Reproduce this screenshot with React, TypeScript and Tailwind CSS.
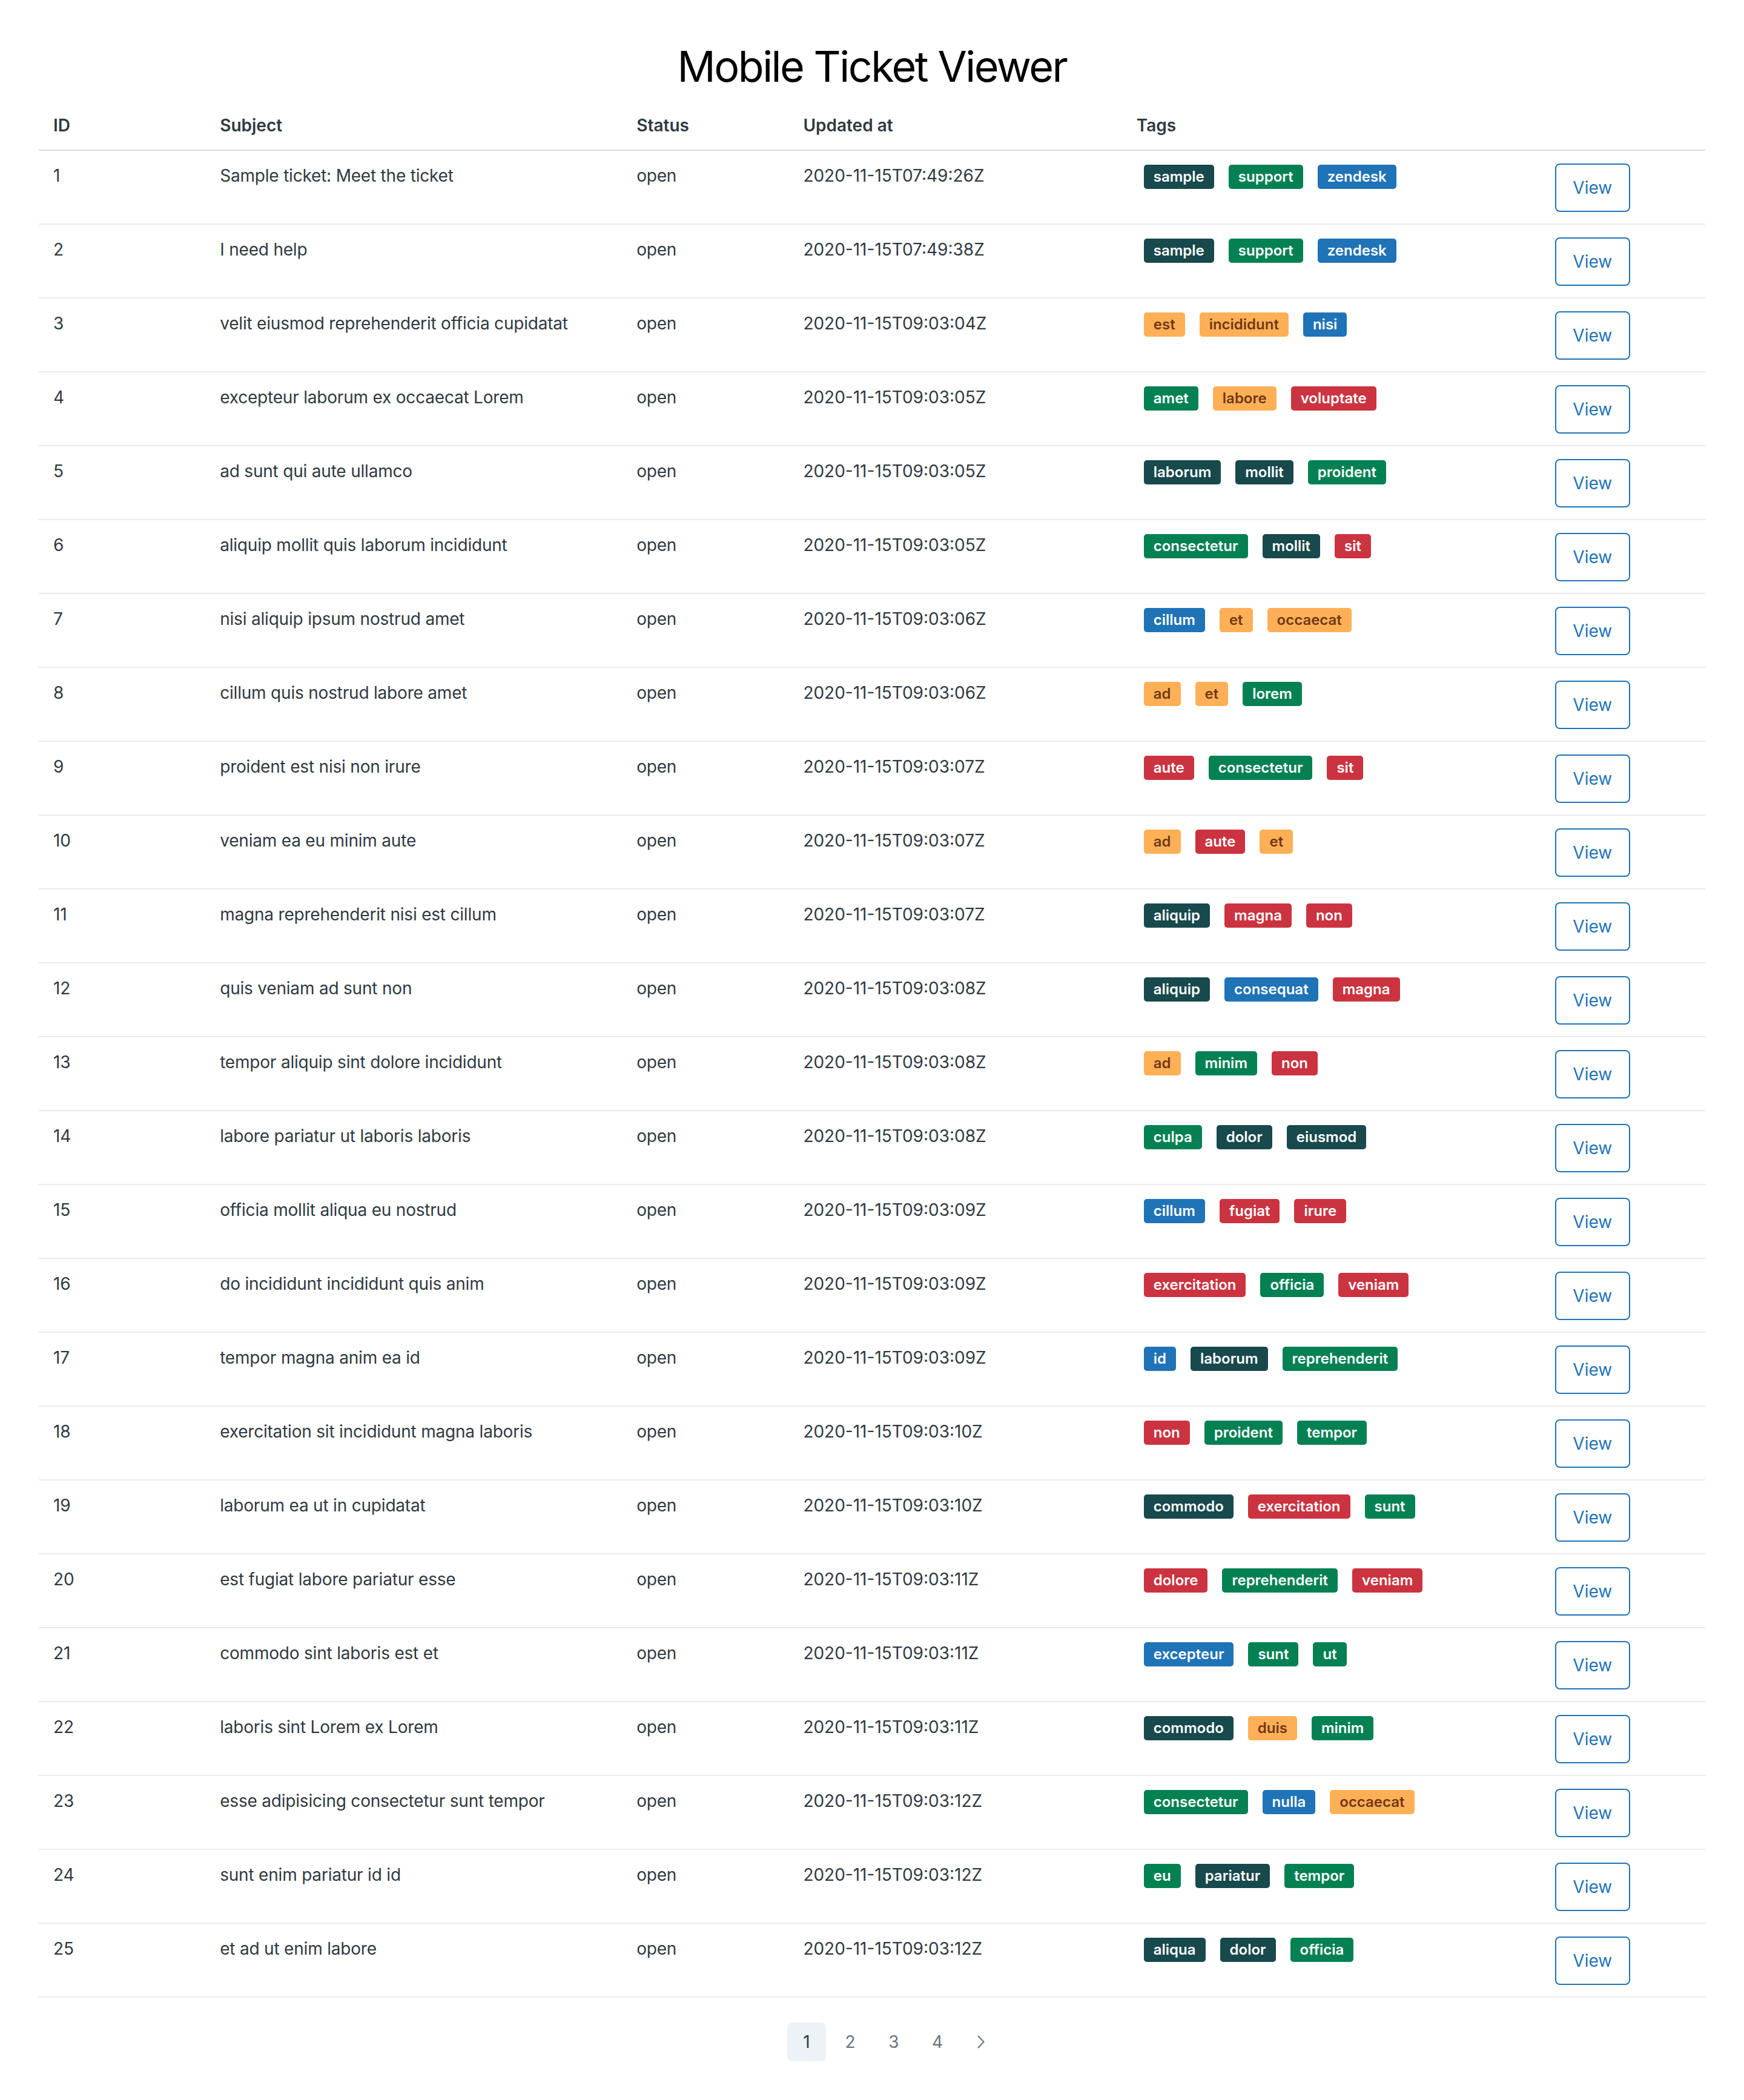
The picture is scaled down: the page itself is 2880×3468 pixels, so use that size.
import React from "react"

type Color = "dark" | "green" | "blue" | "orange" | "red"

const TAG_COLORS: Record<string, Color> = {
  sample: "dark",
  support: "green",
  zendesk: "blue",
  est: "orange",
  incididunt: "orange",
  nisi: "blue",
  amet: "green",
  labore: "orange",
  voluptate: "red",
  laborum: "dark",
  mollit: "dark",
  proident: "green",
  consectetur: "green",
  sit: "red",
  cillum: "blue",
  et: "orange",
  occaecat: "orange",
  ad: "orange",
  lorem: "green",
  aute: "red",
  aliquip: "dark",
  magna: "red",
  non: "red",
  consequat: "blue",
  minim: "green",
  culpa: "green",
  dolor: "dark",
  eiusmod: "dark",
  fugiat: "red",
  irure: "red",
  exercitation: "red",
  officia: "green",
  veniam: "red",
  id: "blue",
  reprehenderit: "green",
  tempor: "green",
  commodo: "dark",
  sunt: "green",
  dolore: "red",
  excepteur: "blue",
  ut: "green",
  duis: "orange",
  nulla: "blue",
  eu: "green",
  pariatur: "dark",
  aliqua: "dark",
}

const TAG_CLASS: Record<Color, string> = {
  dark: "bg-[#17494d] text-white",
  green: "bg-[#038153] text-white",
  blue: "bg-[#1f73b7] text-white",
  orange: "bg-[#ffb057] text-[#703815]",
  red: "bg-[#cc3340] text-white",
}

const tickets: [number, string, string, string][] = [
  [1, "Sample ticket: Meet the ticket", "07:49:26", "sample support zendesk"],
  [2, "I need help", "07:49:38", "sample support zendesk"],
  [3, "velit eiusmod reprehenderit officia cupidatat", "09:03:04", "est incididunt nisi"],
  [4, "excepteur laborum ex occaecat Lorem", "09:03:05", "amet labore voluptate"],
  [5, "ad sunt qui aute ullamco", "09:03:05", "laborum mollit proident"],
  [6, "aliquip mollit quis laborum incididunt", "09:03:05", "consectetur mollit sit"],
  [7, "nisi aliquip ipsum nostrud amet", "09:03:06", "cillum et occaecat"],
  [8, "cillum quis nostrud labore amet", "09:03:06", "ad et lorem"],
  [9, "proident est nisi non irure", "09:03:07", "aute consectetur sit"],
  [10, "veniam ea eu minim aute", "09:03:07", "ad aute et"],
  [11, "magna reprehenderit nisi est cillum", "09:03:07", "aliquip magna non"],
  [12, "quis veniam ad sunt non", "09:03:08", "aliquip consequat magna"],
  [13, "tempor aliquip sint dolore incididunt", "09:03:08", "ad minim non"],
  [14, "labore pariatur ut laboris laboris", "09:03:08", "culpa dolor eiusmod"],
  [15, "officia mollit aliqua eu nostrud", "09:03:09", "cillum fugiat irure"],
  [16, "do incididunt incididunt quis anim", "09:03:09", "exercitation officia veniam"],
  [17, "tempor magna anim ea id", "09:03:09", "id laborum reprehenderit"],
  [18, "exercitation sit incididunt magna laboris", "09:03:10", "non proident tempor"],
  [19, "laborum ea ut in cupidatat", "09:03:10", "commodo exercitation sunt"],
  [20, "est fugiat labore pariatur esse", "09:03:11", "dolore reprehenderit veniam"],
  [21, "commodo sint laboris est et", "09:03:11", "excepteur sunt ut"],
  [22, "laboris sint Lorem ex Lorem", "09:03:11", "commodo duis minim"],
  [23, "esse adipisicing consectetur sunt tempor", "09:03:12", "consectetur nulla occaecat"],
  [24, "sunt enim pariatur id id", "09:03:12", "eu pariatur tempor"],
  [25, "et ad ut enim labore", "09:03:12", "aliqua dolor officia"],
]

const COLS = "grid grid-cols-[10%_25%_10%_20%_25%_10%]"

function Tag({ label }: { label: string }) {
  const color = TAG_COLORS[label] || "dark"
  return (
    <span
      className={`mx-3 inline-flex h-10 items-center rounded-[5px] px-4 text-[24px] font-semibold leading-none ${TAG_CLASS[color]}`}
    >
      {label}
    </span>
  )
}

export default function App() {
  return (
    <div
      className="min-h-[3468px] bg-white px-16 pb-16 text-[#2f3941]"
      style={{ fontFamily: "Inter, 'Noto Sans', sans-serif" }}
    >
      {/* TITLE */}
      <h1 className="pt-[66px] text-center text-[70px] leading-[88px] font-normal tracking-[-2.5px] text-black">
        Mobile Ticket Viewer
      </h1>

      {/* HEADER */}
      <div className={`${COLS} border-b-2 border-[#d8dcde] pt-[33px] pb-5 text-[28px] leading-10 font-semibold`}>
        <div className="px-6">ID</div>
        <div className="px-6">Subject</div>
        <div className="px-6">Status</div>
        <div className="px-6">Updated at</div>
        <div className="px-6">Tags</div>
        <div className="px-6"></div>
      </div>

      {/* ROWS */}
      {tickets.map(([id, subject, time, tags]) => (
        <div
          key={id}
          className={`${COLS} h-[122px] border-b-2 border-[#e9ebed] pt-[21px] text-[28px] leading-10 tracking-[-0.2px]`}
        >
          <div className="px-6">{id}</div>
          <div className="px-6">{subject}</div>
          <div className="px-6">open</div>
          <div className="px-6 tracking-normal">2020-11-15T{time}Z</div>
          <div className="flex items-start px-6 pt-[2px] tracking-normal">
            {tags.split(" ").map((t) => (
              <Tag key={t} label={t} />
            ))}
          </div>
          <div className="px-6 pl-[27px] tracking-normal">
            <button className="h-20 w-[124px] rounded-lg border-2 border-[#1f73b7] bg-white text-[28px] text-[#1f73b7]">
              View
            </button>
          </div>
        </div>
      ))}

      {/* PAGINAÇÃO */}
      <div className="mt-[41px] flex justify-center gap-2 text-[28px] text-[#68737d]">
        <div className="invisible flex h-16 w-16 items-center justify-center">
          <svg width="12" height="22" viewBox="0 0 12 22" fill="none">
            <path d="M11 1 L1.5 11 L11 21" stroke="currentColor" strokeWidth="2" />
          </svg>
        </div>
        <div className="flex h-16 w-16 items-center justify-center rounded-lg bg-[#edf2f7] text-[#2f3941]">1</div>
        <div className="flex h-16 w-16 items-center justify-center">2</div>
        <div className="flex h-16 w-16 items-center justify-center">3</div>
        <div className="flex h-16 w-16 items-center justify-center">4</div>
        <div className="flex h-16 w-16 items-center justify-center">
          <svg width="12" height="22" viewBox="0 0 12 22" fill="none">
            <path d="M1 1 L10.5 11 L1 21" stroke="currentColor" strokeWidth="2" />
          </svg>
        </div>
      </div>
    </div>
  )
}
